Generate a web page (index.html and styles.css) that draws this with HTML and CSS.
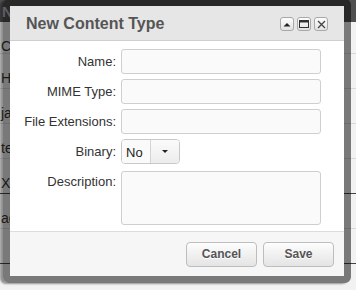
FILE: index.html
```html
<!DOCTYPE html>
<html lang="en">
<head>
  <meta charset="UTF-8" />
  <meta name="viewport" content="width=device-width, initial-scale=1.0"/>
  <title>New Content Type</title>
  <link rel="stylesheet" href="styles.css">
</head>
<body>
  <div class="page">
    <div class="page-header"><span class="cut">N</span></div>
    <div class="page-row first"><span class="cut">C</span></div>
    <div class="page-row"><span class="cut">H</span></div>
    <div class="page-row"><span class="cut">ja</span></div>
    <div class="page-row"><span class="cut">te</span></div>
    <div class="page-row dark-line"><span class="cut">XI</span></div>
    <div class="page-row"><span class="cut">ag</span></div>
    <div class="page-row dark-line"></div>
  </div>

  <div class="dialog-frame">
    <div class="dialog">
      <div class="titlebar">
        <h1>New Content Type</h1>
        <div class="win-btns">
          <span class="win-btn">
            <svg width="8" height="5" viewBox="0 0 8 5"><path d="M0.5 4.5 L4 1 L7.5 4.5 Z" fill="#222"/></svg>
          </span>
          <span class="win-btn">
            <svg width="10" height="8" viewBox="0 0 10 8"><rect x="0.5" y="0.5" width="9" height="7" fill="none" stroke="#333"/><rect x="0.5" y="0.5" width="9" height="2" fill="#333"/></svg>
          </span>
          <span class="win-btn">
            <svg width="9" height="9" viewBox="0 0 9 9"><path d="M1 1 L8 8 M8 1 L1 8" stroke="#444" stroke-width="1.3" fill="none"/></svg>
          </span>
        </div>
      </div>

      <form class="dialog-body">
        <label class="lbl">Name:</label>
        <input type="text" class="field">

        <label class="lbl">MIME Type:</label>
        <input type="text" class="field">

        <label class="lbl">File Extensions:</label>
        <input type="text" class="field">

        <label class="lbl">Binary:</label>
        <div class="btn-group">
          <span class="bg-value">No</span>
          <span class="bg-caret"><span class="caret"></span></span>
        </div>

        <label class="lbl lbl-top">Description:</label>
        <textarea class="field area"></textarea>
      </form>

      <div class="footer">
        <button type="button" class="btn">Cancel</button>
        <button type="button" class="btn">Save</button>
      </div>
    </div>
  </div>
</body>
</html>
```

FILE: styles.css
```css
* {
  box-sizing: border-box;
}

body {
  margin: 0;
  width: 356px;
  height: 290px;
  overflow: hidden;
  position: relative;
  font-family: "Liberation Sans", Arial, sans-serif;
  background: #f2f2f2;
}

/* page behind the dialog */
.page {
  background: #f2f2f2;
}

.page-header {
  height: 22px;
  background: #505050;
  color: #bdbdbd;
  font-size: 15px;
  font-weight: bold;
  padding: 3px 0 0 2px;
}

.page-row {
  height: 35px;
  border-bottom: 1px solid #d8d8d8;
  color: #333;
  font-size: 14px;
  padding: 16px 0 0 1px;
}

.page-row.first {
  height: 32px;
}

.dark-line {
  border-bottom: 1px solid #444;
}

.cut {
  white-space: nowrap;
}

/* dialog */
.dialog-frame {
  position: absolute;
  left: 3px;
  top: -1px;
  width: 348px;
  border: 7px solid rgba(0, 0, 0, 0.5);
  border-radius: 6px;
  box-shadow: -3px 1px 2px rgba(0, 0, 0, 0.4);
}

.dialog {
  background: #fff;
  height: 270px;
  display: flex;
  flex-direction: column;
}

.titlebar {
  height: 35px;
  background: #e6e6e6;
  border-bottom: 1px solid #cfcfcf;
  display: flex;
  align-items: center;
  justify-content: space-between;
  padding: 1px 16px 0 16px;
}

.titlebar h1 {
  margin: 0;
  font-size: 16px;
  font-weight: bold;
  color: #555;
}

.win-btns {
  display: flex;
  gap: 3px;
  padding-top: 1px;
}

.win-btn {
  width: 14px;
  height: 14px;
  border: 1px solid #a8a8a8;
  border-radius: 3px;
  background: linear-gradient(#fdfdfd, #e2e2e2);
  display: flex;
  align-items: center;
  justify-content: center;
}

.dialog-body {
  display: grid;
  grid-template-columns: 106px 200px;
  column-gap: 5px;
  row-gap: 5px;
  padding-top: 8px;
  align-items: center;
  flex: 1;
  align-content: start;
}

.lbl {
  justify-self: end;
  text-align: right;
  font-size: 13px;
  color: #333;
}

.lbl-top {
  align-self: start;
  padding-top: 5px;
}

.field {
  height: 25px;
  border: 1px solid #cfcfcf;
  border-radius: 3px;
  background: #fafafa;
  margin: 0;
  font-family: inherit;
}

.area {
  height: 54px;
  margin-top: 2px;
  resize: none;
}

.btn-group {
  display: flex;
  height: 25px;
  width: 59px;
  border: 1px solid #c8c8c8;
  border-radius: 4px;
  font-size: 13px;
  color: #222;
}

.bg-value {
  width: 29px;
  background: #fafafa;
  border-right: 1px solid #d4d4d4;
  border-radius: 3px 0 0 3px;
  padding: 5px 0 0 4px;
}

.bg-caret {
  flex: 1;
  background: linear-gradient(#fbfbfb, #ececec);
  border-radius: 0 3px 3px 0;
  display: flex;
  align-items: center;
  justify-content: center;
}

.caret {
  width: 0;
  height: 0;
  border-left: 3px solid transparent;
  border-right: 3px solid transparent;
  border-top: 3px solid #222;
}

.footer {
  height: 45px;
  background: #f6f6f6;
  border-top: 1px solid #dcdcdc;
  display: flex;
  justify-content: flex-end;
  align-items: center;
  gap: 6px;
  padding: 0 10px;
}

.btn {
  width: 71px;
  height: 25px;
  border: 1px solid #bdbdbd;
  border-radius: 4px;
  background: linear-gradient(#fdfdfd, #e4e4e4);
  font-family: inherit;
  font-size: 12px;
  font-weight: bold;
  color: #555;
  text-shadow: 0 1px 0 #fff;
  box-shadow: inset 0 1px 0 #fff;
}
```
